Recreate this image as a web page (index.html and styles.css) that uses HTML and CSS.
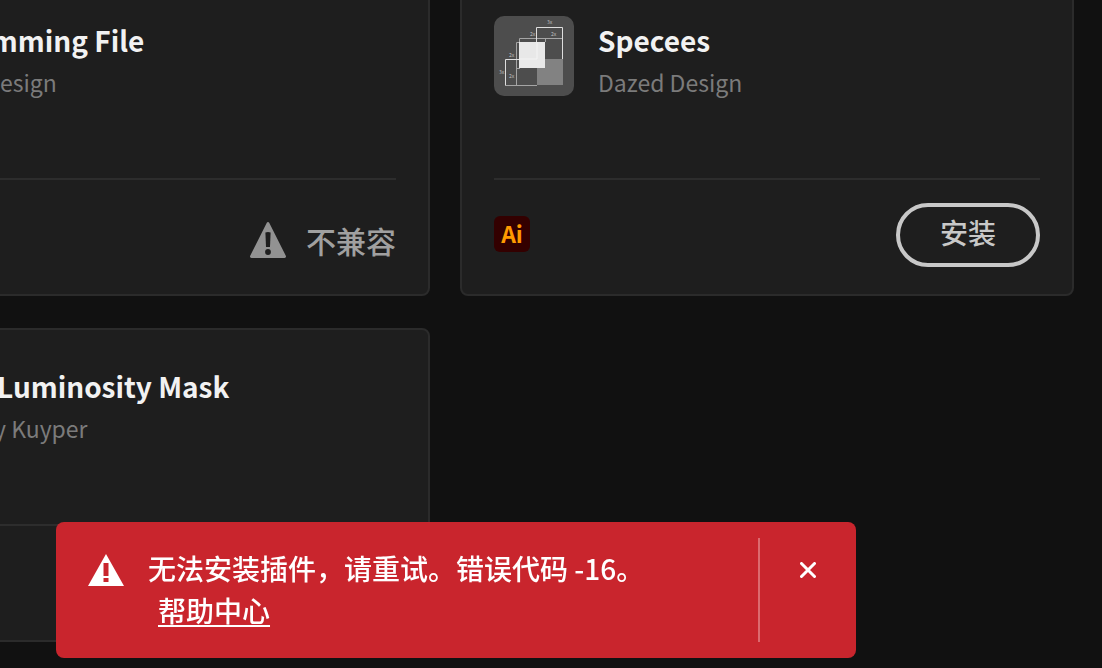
FILE: index.html
```html
<!DOCTYPE html>
<html lang="zh-CN">
<head>
  <meta charset="UTF-8" />
  <meta name="viewport" content="width=device-width, initial-scale=1.0" />
  <title>插件</title>
  <link rel="stylesheet" href="styles.css">
</head>
<body>

  <main class="plugins">
    <article class="card">
      <header class="card-head">
        <div class="thumb"></div>
        <div>
          <h2 class="name">Trimming File</h2>
          <p class="author">Mi Design</p>
        </div>
      </header>
      <footer class="card-foot">
        <p class="status">
          <svg class="status-icon" viewBox="0 0 36 36" aria-hidden="true">
            <path fill="#929292" d="M16.8.8a1.4 1.4 0 0 1 2.4 0L35.800 33.800a1.500 1.500 0 0 1-1.300 2.200H1.500a1.500 1.500 0 0 1-1.300-2.200z"/>
            <path fill="#1e1e1e" d="M15.400 10.500q2.600-1 5.200 0L20 25h-4z"/>
            <circle cx="18" cy="30" r="2.900" fill="#1e1e1e"/>
          </svg>
          不兼容
        </p>
      </footer>
    </article>

    <article class="card">
      <header class="card-head">
        <svg class="thumb" viewBox="0 0 80 80" aria-hidden="true">
          <rect width="80" height="80" fill="#4d4d4d"/>
          <rect x="43" y="43" width="26" height="26" fill="#828282"/>
          <g fill="none" stroke="#a5a5a5">
            <path d="M25.500 26V22.500H68"/>
            <path d="M51.500 23v3"/>
            <path d="M25 26.500H22.500V69M22 52.500h4"/>
            <path d="M11.500 69.500H43"/>
          </g>
          <path d="M42.500 26V11.500H68.500V43M43 43.500H11.500V69.500" fill="none" stroke="#dedede"/>
          <rect x="25" y="26" width="26" height="26" fill="#e8e8e8"/>
          <path d="M43 26v17H25" fill="none" stroke="#f4f4f4"/>
          <g class="thumb-label">
            <text x="53" y="8">3x</text>
            <text x="36" y="20">2x</text>
            <text x="57" y="20">2x</text>
            <text x="15" y="41">2x</text>
            <text x="5" y="58">3x</text>
            <text x="15" y="62">2x</text>
          </g>
        </svg>
        <div>
          <h2 class="name">Specees</h2>
          <p class="author">Dazed Design</p>
        </div>
      </header>
      <footer class="card-foot">
        <span class="app">Ai</span>
        <button class="install" type="button">安装</button>
      </footer>
    </article>

    <article class="card">
      <header class="card-head">
        <div class="thumb"></div>
        <div>
          <h2 class="name">TK Luminosity Mask</h2>
          <p class="author">Tony Kuyper</p>
        </div>
      </header>
      <footer class="card-foot"></footer>
    </article>
  </main>

  <div class="toast" role="alert">
    <svg class="toast-icon" viewBox="0 0 36 32" aria-hidden="true">
      <path fill="#fff" fill-rule="evenodd" d="M18 0 36 32H0zM15.500 9v13h5V9zM15.500 24v4h5v-4z"/>
    </svg>
    <div class="toast-body">
      <p>无法安装插件，请重试。错误代码 -16。</p>
      <a class="help" href="#">帮助中心</a>
    </div>
    <div class="toast-close">
      <button class="close" type="button" aria-label="关闭">
        <svg viewBox="0 0 16 16" aria-hidden="true">
          <path d="M1.500 1.500l13 13M14.500 1.500l-13 13" stroke="#fff" stroke-width="3" stroke-linecap="round"/>
        </svg>
      </button>
    </div>
  </div>

</body>
</html>
```

FILE: styles.css
```css
* {
  box-sizing: border-box;
}

body {
  margin: 0;
  min-height: 100vh;
  overflow: hidden;
  background: #111;
  color: #f2f2f2;
  font-family: "Noto Sans CJK SC", "Noto Sans", sans-serif;
}

h2, p {
  margin: 0;
}

.plugins {
  display: grid;
  grid-template-columns: 1fr 1fr;
  gap: 32px 30px;
  margin: -18px 28px 0 -184px;
}

.card {
  padding: 32px 32px 27px;
  background: #1e1e1e;
  border: 2px solid #2b2b2b;
  border-radius: 8px;
}

.card-head {
  display: flex;
  gap: 24px;
  height: 162px;
}

.thumb {
  flex: none;
  width: 80px;
  height: 80px;
  border-radius: 10px;
}

.thumb-label {
  fill: #c0c0c0;
  font-size: 5px;
}

.name {
  padding-top: 4px;
  font-size: 28px;
  font-weight: 700;
  line-height: 40px;
  white-space: nowrap;
}

.author {
  color: #7b7b7b;
  font-size: 23px;
  line-height: 44px;
  white-space: nowrap;
}

.card-foot {
  display: flex;
  align-items: flex-start;
  justify-content: space-between;
  min-height: 89px;
  padding-top: 23px;
  border-top: 2px solid #2d2d2d;
}

.status {
  display: flex;
  align-items: center;
  gap: 20px;
  margin: 15px 0 0 auto;
  color: #a0a0a0;
  font-size: 30px;
  font-weight: 500;
  line-height: 44px;
}

.status-icon {
  width: 36px;
  height: 36px;
}

.app {
  width: 36px;
  height: 36px;
  margin-top: 13px;
  background: #330000;
  border-radius: 6px;
  color: #ff9a00;
  font-size: 23px;
  font-weight: 700;
  line-height: 34px;
  text-align: center;
}

.install {
  width: 144px;
  height: 64px;
  padding: 0 0 6px;
  background: none;
  border: 4px solid #c8c8c8;
  border-radius: 32px;
  color: #c8c8c8;
  font: inherit;
  font-size: 28px;
  font-weight: 500;
  cursor: pointer;
}

.toast {
  position: fixed;
  bottom: 10px;
  left: 56px;
  display: flex;
  width: 800px;
  max-width: calc(100% - 112px);
  padding: 16px 0 16px 32px;
  background: #c9252d;
  border-radius: 8px;
  color: #fff;
  font-size: 28px;
  font-weight: 500;
  line-height: 42px;
}

.toast-icon {
  flex: none;
  width: 36px;
  height: 32px;
  margin-top: 16px;
}

.toast-body {
  flex: 1;
  padding: 9px 24px 11px;
}

.help {
  margin-left: 10px;
  color: inherit;
  text-decoration-thickness: 2px;
  text-underline-offset: 3px;
}

.toast-close {
  width: 98px;
  border-left: 2px solid #dc6a6f;
}

.close {
  display: flex;
  align-items: center;
  justify-content: center;
  width: 96px;
  height: 64px;
  padding: 0;
  background: none;
  border: 0;
  cursor: pointer;
}

.close svg {
  width: 16px;
  height: 16px;
}
```
